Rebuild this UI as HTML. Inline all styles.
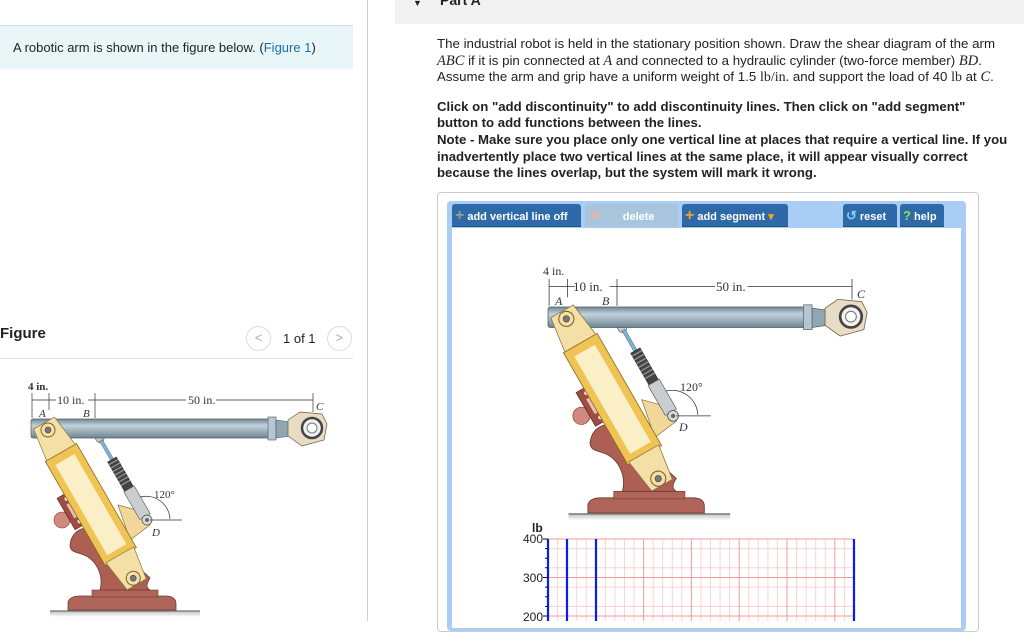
<!DOCTYPE html>
<html><head><meta charset="utf-8"><style>
*{margin:0;padding:0;box-sizing:border-box}
body{width:1024px;height:621px;overflow:hidden;background:#fff;font-family:"Liberation Sans",Arial,sans-serif;color:#222;position:relative}
.abs{position:absolute}
.btn{position:absolute;top:204px;height:23px;background:#2f6aa8;color:#fff;font-size:11px;font-weight:bold;line-height:23px;border-radius:3px 3px 0 0;white-space:nowrap;border-bottom:1px solid #1d4f86}
p.t{font-size:13.3px;line-height:16.5px}
i.m{font-family:"Liberation Serif",serif;font-size:14.5px}
</style></head><body>
<div class="abs" style="left:0;top:25px;width:353px;height:44px;background:#e9f6f7;border-top:1px solid #cfdfe4"></div>
<div class="abs" style="left:13px;top:40px;font-size:13px">A robotic arm is shown in the figure below. (<span style="color:#1a6ea8">Figure 1</span>)</div>
<div class="abs" style="left:367px;top:0;width:1px;height:621px;background:#c7d2dc"></div>
<div class="abs" style="left:395px;top:0;width:629px;height:24px;background:#f2f2f2"></div>
<div class="abs" style="left:413px;top:-2px;font-size:9px">▼</div>
<div class="abs" style="left:440px;top:-8px;font-size:14px;font-weight:bold">Part A</div>
<div class="abs" style="left:0;top:325px;font-size:15px;font-weight:bold">Figure</div>
<div class="abs" style="left:246px;top:326px;width:25px;height:25px;border:1px solid #ddd;border-radius:50%;color:#aaa;font-size:13px;text-align:center;line-height:22px">&lt;</div>
<div class="abs" style="left:283px;top:331px;font-size:13px">1 of 1</div>
<div class="abs" style="left:327px;top:326px;width:25px;height:25px;border:1px solid #ddd;border-radius:50%;color:#aaa;font-size:13px;text-align:center;line-height:22px">&gt;</div>
<div class="abs" style="left:0;top:358px;width:353px;height:1px;background:#dde3e8"></div>

<div class="abs" style="left:437px;top:36px;width:587px">
<p class="t" style="width:578px">The industrial robot is held in the stationary position shown. Draw the shear diagram of the arm <i class="m">ABC</i> if it is pin connected at <i class="m">A</i> and connected to a hydraulic cylinder (two-force member) <i class="m">BD</i>. Assume the arm and grip have a uniform weight of 1.5 <span style="font-family:'Liberation Serif',serif;font-size:14px">lb/in.</span> and support the load of 40 <span style="font-family:'Liberation Serif',serif;font-size:14px">lb</span> at <i class="m">C</i>.</p>
<p class="t" style="font-weight:bold;font-size:13.2px;margin-top:12px;line-height:16.7px;white-space:nowrap">Click on "add discontinuity" to add discontinuity lines. Then click on "add segment"<br>button to add functions between the lines.<br>Note - Make sure you place only one vertical line at places that require a vertical line. If you<br>inadvertently place two vertical lines at the same place, it will appear visually correct<br>because the lines overlap, but the system will mark it wrong.</p>
</div>

<div class="abs" style="left:437px;top:192px;width:542px;height:440px;border:1px solid #ccc;border-radius:4px"></div>
<div class="abs" style="left:447px;top:201px;width:519px;height:430px;background:#a9cdf5;border-radius:4px"></div>
<div class="abs" style="left:452px;top:228px;width:509px;height:400px;background:#fff"></div>
<div class="btn" style="left:452px;width:129px"><span style="color:#999;font-size:16px;padding:0 3px">+</span>add vertical line off</div>
<div class="btn" style="left:585px;width:93px;background:#a7c5dc;border-color:#a7c5dc"><span style="color:#f3b49a;font-size:14px;padding:0 4px">✕</span><span style="margin-left:18px">delete</span></div>
<div class="btn" style="left:682px;width:106px"><span style="color:#f6a21e;font-size:16px;padding:0 3px">+</span>add segment <span style="color:#f6a21e">▾</span></div>
<div class="btn" style="left:843px;width:54px"><span style="color:#7ed0f5;font-size:13px;padding:0 3px">↺</span>reset</div>
<div class="btn" style="left:900px;width:44px"><span style="color:#8fe04a;font-size:13px;padding:0 3px">?</span>help</div>

<svg class="abs" style="left:0;top:0" width="1024" height="621" viewBox="0 0 1024 621">
<defs>
<linearGradient id="bar" x1="0" y1="0" x2="0" y2="1"><stop offset="0" stop-color="#6f8796"/><stop offset=".35" stop-color="#c3d2da"/><stop offset="1" stop-color="#6c8592"/></linearGradient>
<linearGradient id="gnd" x1="0" y1="0" x2="0" y2="1"><stop offset="0" stop-color="#999"/><stop offset="1" stop-color="#fff"/></linearGradient>
<g id="robot">
<rect x="50" y="611" width="150" height="6" fill="url(#gnd)" opacity=".6"/>
<line x1="50" y1="611" x2="200" y2="611" stroke="#555" stroke-width="1"/>
<path d="M68 610 L68 602 Q70 596 80 596 L165 596 Q176 596 176 604 L176 610Z" fill="#b0655a" stroke="#6e3b33" stroke-width=".8"/>
<rect x="92" y="590" width="66" height="7" fill="#b0655a" stroke="#6e3b33" stroke-width=".6"/>
<path d="M70 545 C72 525 95 522 108 540 L150 578 C146 584 146 588 150 590 L100 590 C104 575 96 560 84 555 C76 552 70 552 70 545Z" fill="#ad5f54" stroke="#6e3b33" stroke-width=".8"/>
<circle cx="62" cy="520" r="8" fill="#cf8a7d" stroke="#7a3f36" stroke-width=".6"/>
<g transform="translate(73,510) rotate(-30)"><rect x="-8" y="-18" width="16" height="36" fill="#9f4c43" stroke="#5e2b25" stroke-width=".7"/><rect x="-3" y="-8" width="6" height="16" fill="#e8c0b8"/><circle cx="0" cy="-13" r="2" fill="#eee"/><circle cx="0" cy="13" r="2" fill="#eee"/></g>
<path d="M118 505 L147 513 L150 525 L130 540 Z" fill="#f2d79a" stroke="#8a7340" stroke-width=".7"/>
<g transform="translate(95,430) rotate(60)">
<rect x="0" y="-4" width="14" height="8" rx="4" fill="#c9cdd0" stroke="#555" stroke-width=".6"/>
<rect x="12" y="-1.6" width="22" height="3.2" fill="#7cb3d6" stroke="#456" stroke-width=".4"/>
<rect x="34" y="-5" width="34" height="10" fill="#444" stroke="#222" stroke-width=".5"/>
<path d="M37 -5V5M41 -5V5M45 -5V5M49 -5V5M53 -5V5M57 -5V5M61 -5V5" stroke="#999" stroke-width="1.2"/>
<rect x="68" y="-6" width="32" height="12" fill="#c9cdd0" stroke="#555" stroke-width=".6"/>
<circle cx="0" cy="0" r="5" fill="#e3e6e8" stroke="#555" stroke-width=".7"/><circle cx="0" cy="0" r="2" fill="#666"/>
</g>
<rect x="31" y="419" width="240" height="19" rx="2" fill="url(#bar)" stroke="#4a5d68" stroke-width=".7"/>
<rect x="268" y="417" width="8" height="23" fill="#b6c5ce" stroke="#4a5d68" stroke-width=".6"/>
<path d="M276 420 L290 422 L290 436 L276 438Z" fill="#8fa6b3" stroke="#4a5d68" stroke-width=".6"/>
<path d="M288 420 L300 412 L322 414 L327 424 L324 440 L302 446 L288 436Z" fill="#e8dcc4" stroke="#6a5a40" stroke-width=".7"/>
<circle cx="312" cy="428" r="10" fill="#f2f2f2" stroke="#444" stroke-width="2.5"/><circle cx="312" cy="428" r="5" fill="#fff" stroke="#777"/>
<g transform="translate(48,430) rotate(60.1)">
<path d="M-8 -12 L30 -17 L30 17 L-8 12 Z" fill="#f4dfa6" stroke="#8a7340" stroke-width=".7"/>
<rect x="26" y="-18" width="120" height="36" fill="#efc454" stroke="#8a6d20" stroke-width=".8"/>
<rect x="34" y="-11" width="104" height="22" fill="#fbefc8"/>
<path d="M144 -16 L178 -11 L178 11 L144 16Z" fill="#f4dfa6" stroke="#8a7340" stroke-width=".7"/>
<circle cx="0" cy="0" r="7" fill="#f4dfa6" stroke="#7a6530"/><circle cx="0" cy="0" r="3" fill="#777" stroke="#333" stroke-width=".5"/>
<circle cx="171" cy="0" r="7" fill="#f4dfa6" stroke="#7a6530"/><circle cx="171" cy="0" r="3" fill="#777" stroke="#333" stroke-width=".5"/>
</g>
<circle cx="147" cy="520" r="5" fill="#d8dadc" stroke="#444" stroke-width=".7"/><circle cx="147" cy="520" r="2" fill="#666"/>
<g stroke="#333" stroke-width=".7" fill="none">
<line x1="32" y1="393" x2="32" y2="418"/><line x1="49" y1="393" x2="49" y2="410"/><line x1="95" y1="393" x2="95" y2="418"/><line x1="313" y1="393" x2="313" y2="412"/>
<line x1="32" y1="400" x2="56" y2="400"/><line x1="88" y1="400" x2="186" y2="400"/><line x1="216" y1="400" x2="313" y2="400"/>
<line x1="150" y1="520" x2="182" y2="520"/>
<path d="M140 497 A24 24 0 0 1 170 519"/>
</g>
</g>
</defs>
<use href="#robot"/>
<use href="#robot" transform="translate(514.6,-144.7) scale(1.078)"/>
<g font-family="Liberation Serif,serif" font-size="12" fill="#333">
<text x="28" y="390" font-weight="bold" font-size="11">4 in.</text>
<text x="57" y="404" font-size="12">10 in.</text>
<text x="188" y="404">50 in.</text>
<text x="39" y="417" font-style="italic" font-size="11">A</text>
<text x="83" y="417" font-style="italic" font-size="11">B</text>
<text x="316" y="410" font-style="italic" font-size="11">C</text>
<text x="154" y="498" font-size="11">120°</text>
<text x="152" y="536" font-style="italic" font-size="11">D</text>
<text x="543" y="275" font-size="12">4 in.</text>
<text x="573" y="291" font-size="13">10 in.</text>
<text x="716" y="291" font-size="13">50 in.</text>
<text x="555" y="305" font-style="italic" font-size="12">A</text>
<text x="602" y="305" font-style="italic" font-size="12">B</text>
<text x="857" y="298" font-style="italic" font-size="12">C</text>
<text x="680" y="391" font-size="12">120°</text>
<text x="679" y="431" font-style="italic" font-size="12">D</text>
</g>
<g>
<path d="M548 548.6H854M548 567.8H854M548 587.1H854M548 606.4H854" stroke="#fbd3d3" stroke-width="1"/>
<path d="M557.6 539V621M567.1 539V621M576.7 539V621M586.2 539V621M605.4 539V621M614.9 539V621M624.5 539V621M634 539V621M653.2 539V621M662.7 539V621M672.3 539V621M681.8 539V621M701 539V621M710.5 539V621M720.1 539V621M729.6 539V621M748.8 539V621M758.3 539V621M767.9 539V621M777.4 539V621M796.6 539V621M806.1 539V621M815.7 539V621M825.2 539V621M844.4 539V621" stroke="#fbd3d3" stroke-width="1"/>
<path d="M548 539H854M548 577.5H854M548 616H854M595.8 539V621M643.6 539V621M691.4 539V621M739.2 539V621M787 539V621M834.8 539V621" stroke="#f29a9a" stroke-width="1"/>
<path d="M548 539V621M567 539V621M596 539V621M854 539V621" stroke="#0a1cf0" stroke-width="2.2"/>
<path d="M543 539H548M543 577.5H548M543 616H548M545 548.6H548M545 558.2H548M545 567.8H548M545 587.1H548M545 596.7H548M545 606.4H548" stroke="#111" stroke-width="1"/>
<g font-family="Liberation Sans,sans-serif" font-size="12" fill="#222"><text x="532" y="532" font-weight="bold">lb</text><text x="523" y="543">400</text><text x="523" y="582">300</text><text x="523" y="621">200</text></g>
</g>
</svg>
</body></html>
